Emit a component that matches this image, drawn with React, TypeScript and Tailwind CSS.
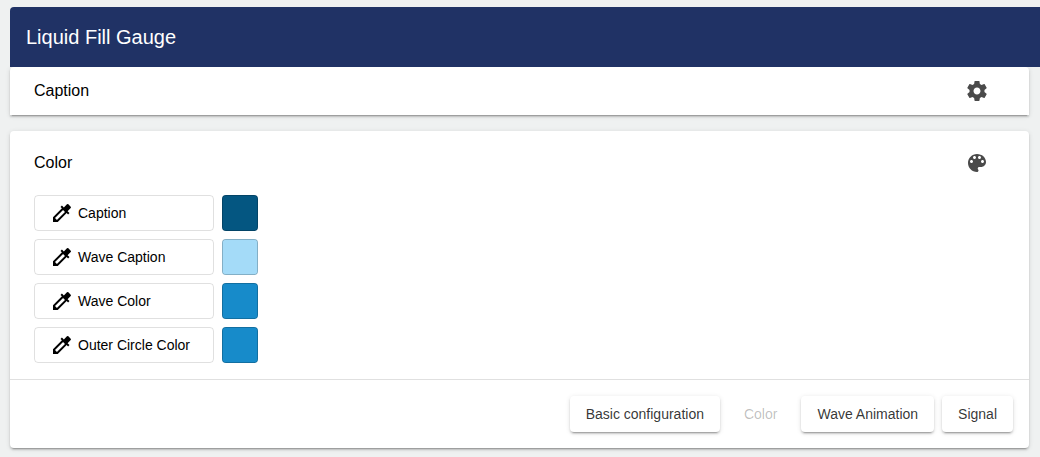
import { useRef, useState } from 'react';
import { MdColorize } from 'react-icons/md';

interface ColorSetting {
  id: string;
  label: string;
  value: string;
}

const initialColors: ColorSetting[] = [
  { id: 'caption', label: 'Caption', value: '#045681' },
  { id: 'waveCaption', label: 'Wave Caption', value: '#a4dbf8' },
  { id: 'wave', label: 'Wave Color', value: '#178bca' },
  { id: 'outerCircle', label: 'Outer Circle Color', value: '#178bca' },
];

const steps = ['Basic configuration', 'Color', 'Wave Animation', 'Signal'];

// Three layer elevation used by the panels and the raised buttons
const elevation =
  'shadow-[0_3px_1px_-2px_rgba(0,0,0,0.2),0_2px_2px_0_rgba(0,0,0,0.14),0_1px_5px_0_rgba(0,0,0,0.12)]';

// First generation Material glyphs, react-icons only ships the newer outlines
function SettingsIcon() {
  return (
    <svg viewBox="0 0 24 24" fill="currentColor" aria-hidden="true" className="h-6 w-6 text-[#4a4a4a]">
      <path d="M19.43 12.98c.04-.32.07-.64.07-.98s-.03-.66-.07-.98l2.11-1.65c.19-.15.24-.42.12-.64l-2-3.46c-.12-.22-.39-.3-.61-.22l-2.49 1c-.52-.4-1.08-.73-1.69-.98l-.38-2.65C14.46 2.18 14.25 2 14 2h-4c-.25 0-.46.18-.49.42l-.38 2.65c-.61.25-1.17.59-1.69.98l-2.49-1c-.23-.09-.49 0-.61.22l-2 3.46c-.13.22-.07.49.12.64l2.11 1.65c-.04.32-.07.65-.07.98s.03.66.07.98l-2.11 1.65c-.19.15-.24.42-.12.64l2 3.46c.12.22.39.3.61.22l2.49-1c.52.4 1.08.73 1.69.98l.38 2.65c.03.24.24.42.49.42h4c.25 0 .46-.18.49-.42l.38-2.65c.61-.25 1.17-.59 1.69-.98l2.49 1c.23.09.49 0 .61-.22l2-3.46c.12-.22.07-.49-.12-.64l-2.11-1.65zM12 15.5c-1.93 0-3.5-1.57-3.5-3.5s1.57-3.5 3.5-3.5 3.5 1.57 3.5 3.5-1.57 3.5-3.5 3.5z" />
    </svg>
  );
}

function PaletteIcon() {
  return (
    <svg viewBox="0 0 24 24" fill="currentColor" aria-hidden="true" className="h-6 w-6 text-[#4a4a4a]">
      <path d="M12 3c-4.97 0-9 4.03-9 9s4.03 9 9 9c.83 0 1.5-.67 1.5-1.5 0-.39-.15-.74-.39-1.01-.23-.26-.38-.61-.38-.99 0-.83.67-1.5 1.5-1.5H16c2.76 0 5-2.24 5-5 0-4.42-4.03-8-9-8zm-5.5 9c-.83 0-1.5-.67-1.5-1.5S5.67 9 6.5 9 8 9.67 8 10.5 7.33 12 6.5 12zm3-4C8.67 8 8 7.33 8 6.5S8.67 5 9.5 5s1.5.67 1.5 1.5S10.33 8 9.5 8zm5 0c-.83 0-1.5-.67-1.5-1.5S13.67 5 14.5 5s1.5.67 1.5 1.5S15.33 8 14.5 8zm3 4c-.83 0-1.5-.67-1.5-1.5S16.67 9 17.5 9s1.5.67 1.5 1.5-.67 1.5-1.5 1.5z" />
    </svg>
  );
}

function ColorRow({ color, onChange }: { color: ColorSetting; onChange: (value: string) => void }) {
  const input = useRef<HTMLInputElement>(null);

  return (
    <div className="flex gap-2">
      <button type="button" onClick={() => input.current?.click()}
        className="flex h-9 w-[180px] items-center gap-1 rounded border border-black/12 px-[15px] text-sm text-black">
        <MdColorize className="h-6 w-6" /> {color.label}
      </button>
      <input ref={input} type="color" aria-label={color.label} value={color.value}
        onChange={e => onChange(e.target.value)}
        style={{ backgroundColor: color.value }}
        className="h-9 w-9 cursor-pointer appearance-none rounded border border-black/20 p-0 [&::-webkit-color-swatch]:border-0 [&::-webkit-color-swatch-wrapper]:p-0" />
    </div>
  );
}

export default function App() {
  const [colors, setColors] = useState(initialColors);
  const [step, setStep] = useState('Color');

  const updateColor = (id: string, value: string) => {
    setColors(colors.map(c => (c.id === id ? { ...c, value } : c)));
  };

  return (
    <div className="min-h-screen bg-[#eff1f1] pt-[7px] pl-2.5 font-['Liberation_Sans',Arial,sans-serif] text-black">
      <header className="relative flex h-15 items-center rounded-tl bg-[#203265] px-4 text-white">
        <h1 className="text-xl">Liquid Fill Gauge</h1>
      </header>

      <main className="mr-[11px] space-y-4">
        <section className={`rounded-t bg-white ${elevation}`}>
          <button type="button" onClick={() => setStep('Basic configuration')}
            className="flex h-12 w-full items-center justify-between pr-10 pl-6">
            Caption
            <SettingsIcon />
          </button>
        </section>

        <section className={`rounded bg-white ${elevation}`}>
          <div className="flex h-16 items-center justify-between pr-10 pl-6">
            <h2>Color</h2>
            <PaletteIcon />
          </div>
          <div className="flex flex-col gap-2 px-6 pb-4">
            {colors.map(c => (
              <ColorRow key={c.id} color={c} onChange={value => updateColor(c.id, value)} />
            ))}
          </div>
          <div className="flex justify-end gap-2 border-t border-black/12 p-4">
            {steps.map(s => (
              <button key={s} type="button" disabled={s === step} onClick={() => setStep(s)}
                className={`h-9 rounded px-4 text-sm ${s === step ? 'text-black/26' : `bg-white text-black/80 ${elevation}`}`}>
                {s}
              </button>
            ))}
          </div>
        </section>
      </main>
    </div>
  );
}
